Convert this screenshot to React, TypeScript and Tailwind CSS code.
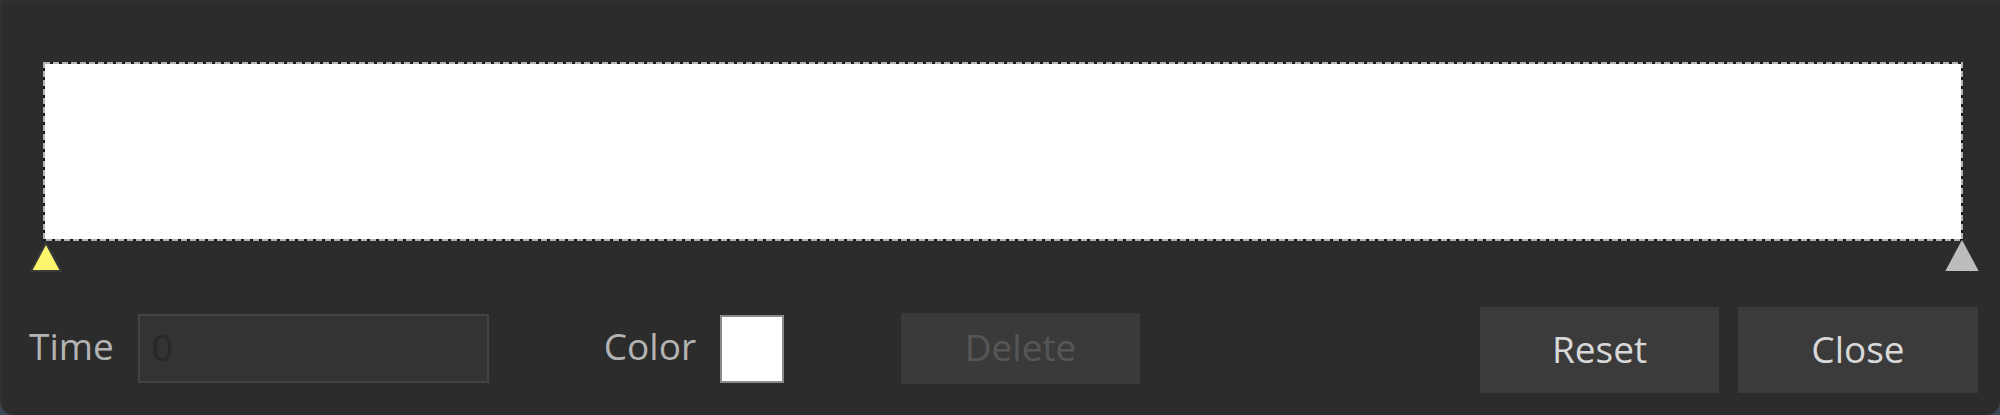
import React from "react";

function Marker({ fill, stroke }: { fill: string; stroke: string }) {
  return (
    <svg width="34" height="32" viewBox="0 0 34 32">
      <polygon points="17,2 32,30 2,30" fill={fill} stroke={stroke} strokeWidth="2" strokeLinejoin="miter" />
    </svg>
  );
}

export default function App() {
  return (
    <div className="w-[2000px] h-[415px] bg-[#3c4656] overflow-hidden" style={{ fontFamily: '"Open Sans", "Noto Sans", sans-serif' }}>
      <div className="w-full h-full bg-[#2c2c2c] rounded-b-[14px] flex flex-col border-l-2 border-t-[3px] border-l-[#313131] border-t-[#303030]">
        <div className="pt-[59px] pl-[41px] pr-[37px]">
          <div className="relative h-[179px] bg-white">
            <svg className="absolute inset-0 w-full h-full" preserveAspectRatio="none">
              <rect x="1" y="1" width="calc(100% - 2px)" height="calc(100% - 2px)" fill="none" stroke="#1c1c1c" strokeWidth="2" />
              <rect x="1" y="1" width="calc(100% - 2px)" height="calc(100% - 2px)" fill="none" stroke="#b4b4b4" strokeWidth="2" strokeDasharray="6 3" />
            </svg>
          </div>
        </div>
        <div className="relative h-[33px]">
          <div className="absolute left-[27px] top-[0px]">
            <Marker fill="#fbf66c" stroke="#3a3a3a" />
          </div>
          <div className="absolute left-[1943px] top-[-1px]">
            <Marker fill="#bcbcbc" stroke="#bcbcbc" />
          </div>
        </div>
        <div className="flex items-center h-[86px] mt-[33px] pl-[27px] pr-[22px]">
          <span className="shrink-0 text-[37px] leading-none text-[#b3b3b3] mt-[-10px]">Time</span>
          <div className="shrink-0 ml-[24px] w-[351px] h-[69px] bg-[#333333] border-2 border-[#434343] flex items-center pl-[12px] mt-[-3px]">
            <span className="text-[37px] leading-none text-[#272727] mt-[-4px]">0</span>
          </div>
          <span className="shrink-0 ml-[115px] text-[37px] leading-none text-[#b3b3b3] mt-[-10px]">Color</span>
          <div className="shrink-0 ml-[24px] w-[64px] h-[68px] bg-white border-2 border-[#8a8a8a] mt-[-3px]" />
          <div className="shrink-0 ml-[117px] w-[239px] h-[71px] bg-[#3a3a3a] flex items-center justify-center mt-[-3px]">
            <span className="text-[37px] leading-none text-[#565656] mt-[-4px]">Delete</span>
          </div>
          <div className="flex-1" />
          <div className="shrink-0 w-[239px] h-[86px] bg-[#3b3b3b] flex items-center justify-center">
            <span className="text-[37px] leading-none text-[#d8d8d8] mt-[-3px]">Reset</span>
          </div>
          <div className="shrink-0 ml-[19px] w-[240px] h-[86px] bg-[#3b3b3b] flex items-center justify-center">
            <span className="text-[37px] leading-none text-[#d8d8d8] mt-[-3px]">Close</span>
          </div>
        </div>
      </div>
    </div>
  );
}
